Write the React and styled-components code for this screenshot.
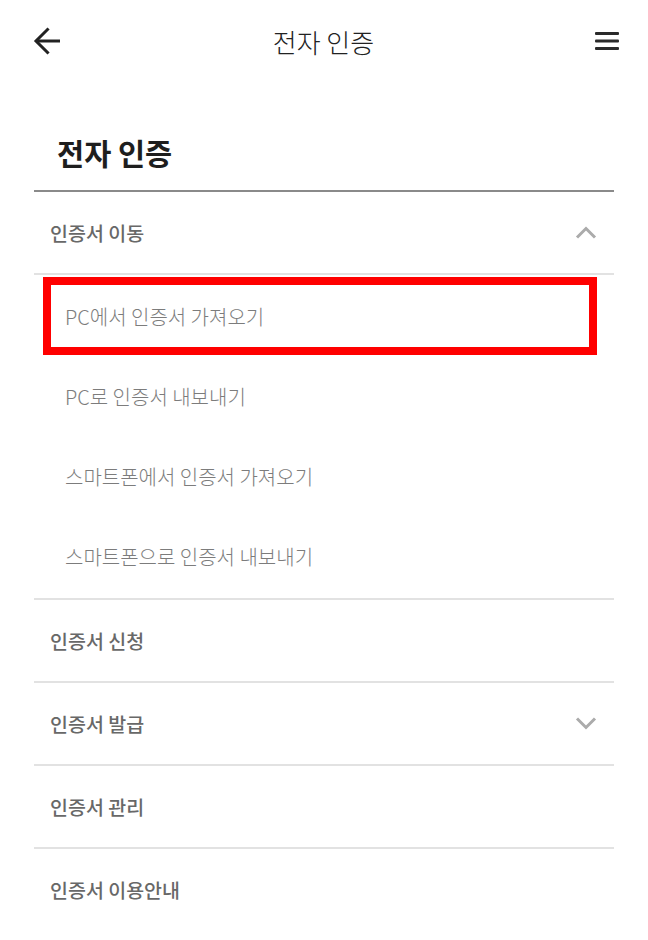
import styled, { createGlobalStyle } from 'styled-components'

const GlobalStyle = createGlobalStyle`
    body {
        margin: 0;
        background: #fff;
        font-family: 'Noto Sans CJK KR', 'Noto Sans', sans-serif;
    }
`

const menu = [
    {
        title: '인증서 이동',
        open: true,
        children: [
            { label: 'PC에서 인증서 가져오기', marked: true },
            { label: 'PC로 인증서 내보내기' },
            { label: '스마트폰에서 인증서 가져오기' },
            { label: '스마트폰으로 인증서 내보내기' },
        ],
    },
    { title: '인증서 신청' },
    { title: '인증서 발급', open: false, children: [] },
    { title: '인증서 관리' },
    { title: '인증서 이용안내', last: true },
]

const BackIcon = () => (
    <svg width="28" height="28" viewBox="0 0 28 28" fill="none">
        <path d="M3 14H27" stroke="#222" strokeWidth="3" />
        <path
            d="M14.5 2.5L3 14L14.5 25.5"
            stroke="#222"
            strokeWidth="3"
            strokeLinecap="square"
        />
    </svg>
)

const MenuIcon = () => (
    <svg width="24" height="18" viewBox="0 0 24 18">
        <rect x="0" y="0" width="24" height="3" rx="1" fill="#2a2a2a" />
        <rect x="0" y="7.5" width="24" height="3" rx="1" fill="#2a2a2a" />
        <rect x="0" y="15" width="24" height="3" rx="1" fill="#2a2a2a" />
    </svg>
)

const Chevron = ({ up }) => (
    <svg width="22" height="13" viewBox="0 0 22 13" fill="none">
        <path
            d={up ? 'M2 11.5L11 2.5L20 11.5' : 'M2 1.5L11 10.5L20 1.5'}
            stroke="#ababab"
            strokeWidth="3"
        />
    </svg>
)

export default function App() {
    return (
        <>
            <GlobalStyle />
            <Page>
                <Header>
                    <IconButton>
                        <BackIcon />
                    </IconButton>
                    <HeaderTitle>전자 인증</HeaderTitle>
                    <IconButton>
                        <MenuIcon />
                    </IconButton>
                </Header>
                <Content>
                    <PageTitle>전자 인증</PageTitle>
                    <Accordion>
                        {menu.map((item) => (
                            <Section key={item.title} $last={item.last}>
                                <Row>
                                    <RowTitle>{item.title}</RowTitle>
                                    {item.children && (
                                        <Chevron up={item.open} />
                                    )}
                                </Row>
                                {item.open && (
                                    <SubList>
                                        {item.children.map((sub) => (
                                            <SubItem
                                                key={sub.label}
                                                $marked={sub.marked}
                                            >
                                                {sub.label}
                                            </SubItem>
                                        ))}
                                    </SubList>
                                )}
                            </Section>
                        ))}
                    </Accordion>
                </Content>
            </Page>
        </>
    )
}

const Page = styled.div`
    width: 648px;
    min-height: 940px;
    background: #fff;
`

const Header = styled.header`
    height: 82px;
    padding: 0 27px 0 33px;
    display: flex;
    align-items: center;
    justify-content: space-between;
`

const IconButton = styled.div`
    width: 28px;
    height: 28px;
    display: flex;
    align-items: center;
    justify-content: center;
    cursor: pointer;
`

const HeaderTitle = styled.h1`
    margin: 0 7px 0 0;
    font-size: 26px;
    font-weight: 300;
    color: #222;
`

const Content = styled.main`
    padding: 0 34px;
`

const PageTitle = styled.h2`
    margin: 0;
    padding: 50px 0 18px 23px;
    height: 40px;
    line-height: 40px;
    font-size: 29.5px;
    font-weight: 700;
    color: #1e1e1e;
    border-bottom: 2px solid #8a8a8a;
`

const Accordion = styled.div`
    display: flex;
    flex-direction: column;
`

const Section = styled.section`
    border-bottom: ${({ $last }) => ($last ? 'none' : '2px solid #e2e2e2')};
`

const Row = styled.div`
    height: 81px;
    padding: 0 17px 0 16px;
    display: flex;
    align-items: center;
    justify-content: space-between;
`

const RowTitle = styled.span`
    font-size: 19.5px;
    font-weight: 500;
    color: #686868;
`

const SubList = styled.div`
    border-top: 2px solid #e2e2e2;
    padding: 1px 0 2px;
    display: flex;
    flex-direction: column;
`

const SubItem = styled.div`
    position: relative;
    height: 80px;
    padding-left: 31px;
    box-sizing: border-box;
    display: flex;
    align-items: center;
    font-size: 20px;
    font-weight: 300;
    color: #7c7c7c;

    &::after {
        content: '';
        display: ${({ $marked }) => ($marked ? 'block' : 'none')};
        position: absolute;
        top: 1px;
        bottom: 1px;
        left: 9px;
        right: 17px;
        border: 8px solid #ff0000;
    }
`
